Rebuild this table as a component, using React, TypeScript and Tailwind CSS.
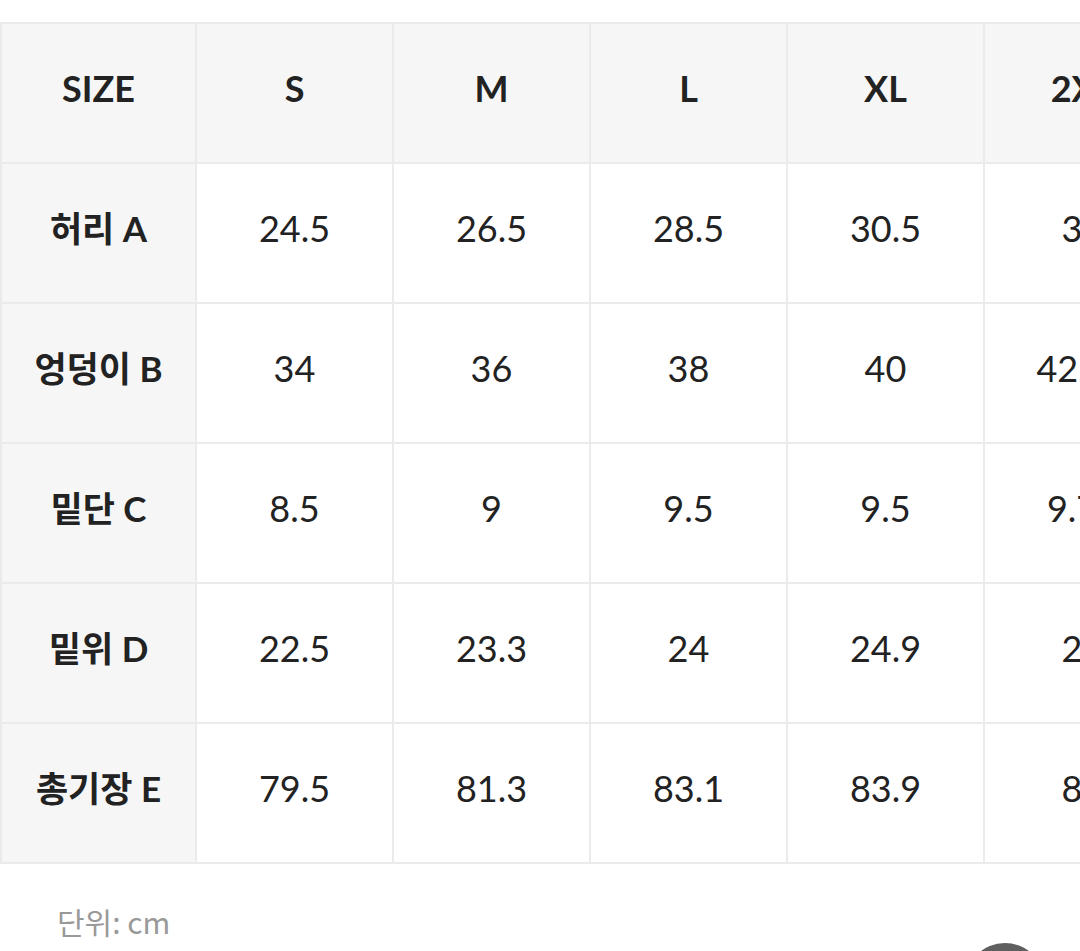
const headers = ['SIZE', 'S', 'M', 'L', 'XL', '2XL', '3XL']

const rows: { label: string; values: string[] }[] = [
  { label: '허리 A', values: ['24.5', '26.5', '28.5', '30.5', '33', '35'] },
  { label: '엉덩이 B', values: ['34', '36', '38', '40', '42.25', '44.5'] },
  { label: '밑단 C', values: ['8.5', '9', '9.5', '9.5', '9.75', '10'] },
  { label: '밑위 D', values: ['22.5', '23.3', '24', '24.9', '26', '27'] },
  { label: '총기장 E', values: ['79.5', '81.3', '83.1', '83.9', '85', '86'] },
]

const font = { fontFamily: 'Lato, "Noto Sans CJK KR", sans-serif' }

export default function App() {
  return (
    <div className="w-[1080px] h-[951px] bg-white overflow-hidden relative" style={font}>
      <div className="pt-[22px] overflow-hidden">
        <table className="border-collapse table-fixed w-[1377px] text-[#222]">
          <thead>
            <tr className="h-[140px]">
              {headers.map((h, i) => (
                <th
                  key={h}
                  className={`${i === 0 ? 'w-[195px]' : 'w-[197px]'} border-2 border-[#ebebeb] bg-[#f6f6f6] text-[36px] font-bold text-center align-middle pb-[10px]`}
                >
                  {h}
                </th>
              ))}
            </tr>
          </thead>
          <tbody>
            {rows.map((r) => (
              <tr key={r.label} className="h-[140px]">
                <td className="border-2 border-[#ebebeb] bg-[#f6f6f6] text-[35px] font-bold text-center pb-[10px]">
                  {r.label}
                </td>
                {r.values.map((v, i) => (
                  <td
                    key={i}
                    className="border-2 border-[#ebebeb] text-[36px] text-center pb-[10px]"
                  >
                    {v}
                  </td>
                ))}
              </tr>
            ))}
          </tbody>
        </table>
      </div>
      <p
        className="pl-[57px] pt-[35px] text-[30px] text-[#999]"
        style={{ fontFamily: '"Noto Sans CJK KR", "Noto Sans", sans-serif' }}
      >
        단위: cm
      </p>
      <div className="absolute left-[965px] top-[943px] size-[80px] rounded-full bg-[#5f5f5f]" />
    </div>
  )
}
